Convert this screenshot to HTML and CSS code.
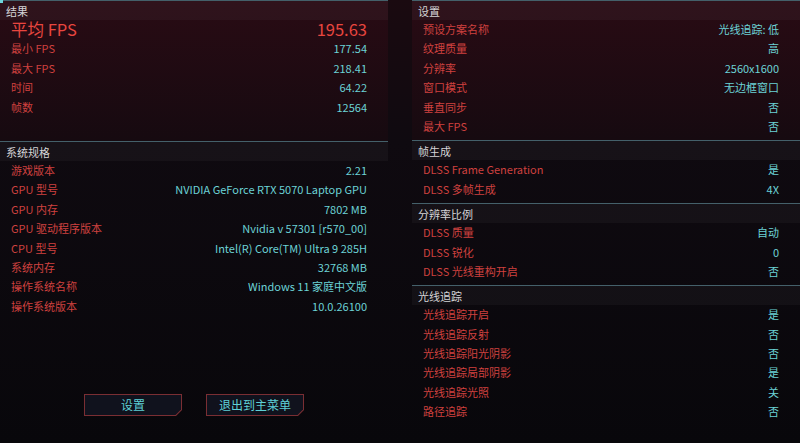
FILE: index.html
```html
<!DOCTYPE html>
<html lang="zh-CN">
<head>
    <meta charset="UTF-8">
    <title>基准测试结果</title>
    <link rel="stylesheet" href="styles.css">
</head>
<body>
<div class="screen">
    <div class="column">
        <section class="group group-warm group-results">
            <h2 class="group-title">结果</h2>
            <div class="row row-big"><span class="label">平均 FPS</span><span class="value">195.63</span></div>
            <div class="row"><span class="label">最小 FPS</span><span class="value">177.54</span></div>
            <div class="row"><span class="label">最大 FPS</span><span class="value">218.41</span></div>
            <div class="row"><span class="label">时间</span><span class="value">64.22</span></div>
            <div class="row"><span class="label">帧数</span><span class="value">12564</span></div>
        </section>
        <section class="group">
            <h2 class="group-title">系统规格</h2>
            <div class="row"><span class="label">游戏版本</span><span class="value">2.21</span></div>
            <div class="row"><span class="label">GPU 型号</span><span class="value">NVIDIA GeForce RTX 5070 Laptop GPU</span></div>
            <div class="row"><span class="label">GPU 内存</span><span class="value">7802 MB</span></div>
            <div class="row"><span class="label">GPU 驱动程序版本</span><span class="value">Nvidia v 57301 [r570_00]</span></div>
            <div class="row"><span class="label">CPU 型号</span><span class="value">Intel(R) Core(TM) Ultra 9 285H</span></div>
            <div class="row"><span class="label">系统内存</span><span class="value">32768 MB</span></div>
            <div class="row"><span class="label">操作系统名称</span><span class="value">Windows 11 家庭中文版</span></div>
            <div class="row"><span class="label">操作系统版本</span><span class="value">10.0.26100</span></div>
        </section>
        <div class="actions">
            <button class="btn"><span>设置</span></button>
            <button class="btn"><span>退出到主菜单</span></button>
        </div>
    </div>

    <div class="column">
        <section class="group group-warm">
            <h2 class="group-title">设置</h2>
            <div class="row"><span class="label">预设方案名称</span><span class="value">光线追踪: 低</span></div>
            <div class="row"><span class="label">纹理质量</span><span class="value">高</span></div>
            <div class="row"><span class="label">分辨率</span><span class="value">2560x1600</span></div>
            <div class="row"><span class="label">窗口模式</span><span class="value">无边框窗口</span></div>
            <div class="row"><span class="label">垂直同步</span><span class="value">否</span></div>
            <div class="row"><span class="label">最大 FPS</span><span class="value">否</span></div>
        </section>
        <section class="group">
            <h2 class="group-title">帧生成</h2>
            <div class="row"><span class="label">DLSS Frame Generation</span><span class="value">是</span></div>
            <div class="row"><span class="label">DLSS 多帧生成</span><span class="value">4X</span></div>
        </section>
        <section class="group">
            <h2 class="group-title">分辨率比例</h2>
            <div class="row"><span class="label">DLSS 质量</span><span class="value">自动</span></div>
            <div class="row"><span class="label">DLSS 锐化</span><span class="value">0</span></div>
            <div class="row"><span class="label">DLSS 光线重构开启</span><span class="value">否</span></div>
        </section>
        <section class="group">
            <h2 class="group-title">光线追踪</h2>
            <div class="row"><span class="label">光线追踪开启</span><span class="value">是</span></div>
            <div class="row"><span class="label">光线追踪反射</span><span class="value">否</span></div>
            <div class="row"><span class="label">光线追踪阳光阴影</span><span class="value">否</span></div>
            <div class="row"><span class="label">光线追踪局部阴影</span><span class="value">是</span></div>
            <div class="row"><span class="label">光线追踪光照</span><span class="value">关</span></div>
            <div class="row"><span class="label">路径追踪</span><span class="value">否</span></div>
        </section>
    </div>
</div>
</body>
</html>
```

FILE: styles.css
```css
* {
    box-sizing: border-box;
}

body {
    margin: 0;
    width: 800px;
    height: 443px;
    overflow: hidden;
    background: linear-gradient(#1a0a10 0, #0f0a10 32%, #08070b 100%);
    font-family: "Noto Sans CJK SC", "Noto Sans", sans-serif;
    font-size: 11px;
}

.screen {
    display: flex;
    gap: 24px;
    height: 443px;
}

.column {
    width: 388px;
    display: flex;
    flex-direction: column;
}

.group {
    position: relative;
    border-top: 1px solid #44606a;
    padding-bottom: 4px;
}

.group-warm {
    background: linear-gradient(#290b14, #160a10);
}

.group-results {
    padding-bottom: 24px;
}

/* little cyan tick at the corner of the first panel */
.group-results::before {
    content: "";
    position: absolute;
    left: 0;
    top: -1px;
    width: 3px;
    height: 3px;
    background: #6fd6dc;
}

.group-title {
    margin: 0;
    height: 19px;
    padding: 2px 0 0 6px;
    font-size: 11px;
    font-weight: normal;
    line-height: 17px;
    color: #d4d4d6;
    background: rgba(255, 255, 255, 0.035);
}

.row {
    display: flex;
    justify-content: space-between;
    height: 19.4px;
    line-height: 19.4px;
    padding: 0 21px 0 11px;
}

.label {
    color: #cf413f;
}

.value {
    color: #6cd3d6;
}

.row-big {
    font-size: 16.5px;
}

.row-big .label,
.row-big .value {
    color: #e8463f;
}

.actions {
    margin-top: auto;
    padding-bottom: 27px;
    display: flex;
    justify-content: center;
    gap: 24px;
}

.btn {
    width: 98px;
    height: 22px;
    padding: 1px;
    border: none;
    background: #7a2e33;
    font: inherit;
    cursor: pointer;
    clip-path: polygon(0 0, 100% 0, 100% calc(100% - 6px), calc(100% - 6px) 100%, 0 100%);
}

.btn span {
    display: block;
    height: 100%;
    background: #10121d;
    color: #5fd0d6;
    font-size: 12px;
    line-height: 20px;
    clip-path: polygon(0 0, 100% 0, 100% calc(100% - 5.5px), calc(100% - 5.5px) 100%, 0 100%);
}
```
